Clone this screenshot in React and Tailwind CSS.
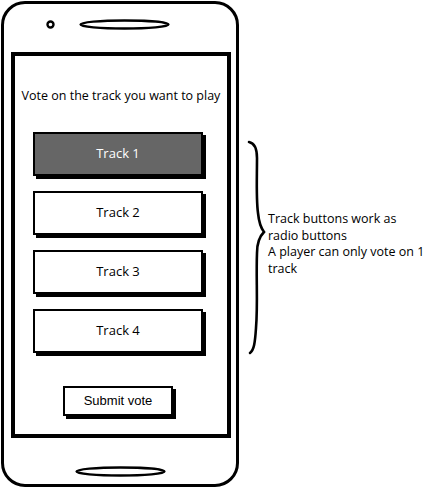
function Oval({ className }) {
  return (
    <svg className={className} width="91" height="11" viewBox="0 0 91 11" fill="none">
      <ellipse cx="45.5" cy="5.5" rx="44" ry="4" stroke="#000" strokeWidth="2.4" />
    </svg>
  );
}

export default function App() {
  const tracks = ["Track 1", "Track 2", "Track 3", "Track 4"];
  const selected = 0;

  return (
    <div className="flex h-[490px] w-[428px] items-start bg-white text-black" style={{ fontFamily: '"Open Sans", "Liberation Sans", sans-serif' }}>
      {/* phone */}
      <div className="ml-[1px] mt-[1px] flex h-[486px] w-[238px] flex-col rounded-[24px] border-[3px] border-black">
        <div className="flex h-[48px] items-start">
          <svg className="ml-[42px] mt-[16px]" width="9" height="9" viewBox="0 0 9 9" fill="none">
            <circle cx="4.5" cy="4.5" r="3" stroke="#000" strokeWidth="2.4" />
          </svg>
          <Oval className="ml-[24px] mt-[15px]" />
        </div>

        <div className="ml-[7px] flex h-[386px] w-[220px] flex-col border-4 border-black">
          <p className="mt-[30px] text-center text-[12.5px] leading-[20px]">Vote on the track you want to play</p>

          <div className="ml-[18px] mt-[26px] flex w-[170px] flex-col gap-[15px]">
            {tracks.map((t, i) => (
              <button
                key={t}
                className={`flex h-[44px] items-center justify-center border-2 border-black text-[13px] shadow-[3px_3px_0_#000] ${
                  i === selected ? "bg-[#666666] text-white" : "bg-white text-black"
                }`}
              >
                {t}
              </button>
            ))}
          </div>

          <button
            className="ml-[48px] mt-[33px] flex h-[30px] w-[110px] items-center justify-center border-2 border-black bg-white text-[13px] shadow-[3px_3px_0_#000]"
            style={{ fontFamily: '"Liberation Sans", Arial, sans-serif' }}
          >
            Submit vote
          </button>
        </div>

        <Oval className="ml-[71px] mt-[28px]" />
      </div>

      {/* annotation */}
      <svg className="ml-[5px] mt-[138px] shrink-0" width="24" height="220" viewBox="0 0 24 220" fill="none">
        <path
          d="M5 4 C10 5 13 10 13 20 C13 40 12 60 14 75 C15 85 17 90 20 94 C16 98 13 105 13 115 C12 140 14 165 12 190 C11 205 10 212 6 215"
          stroke="#000"
          strokeWidth="2.6"
          strokeLinecap="round"
        />
      </svg>
      <div className="mt-[211px] text-[12.5px] leading-[16.5px]">
        <p>Track buttons work as</p>
        <p>radio buttons</p>
        <p>A player can only vote on 1</p>
        <p>track</p>
      </div>
    </div>
  );
}
